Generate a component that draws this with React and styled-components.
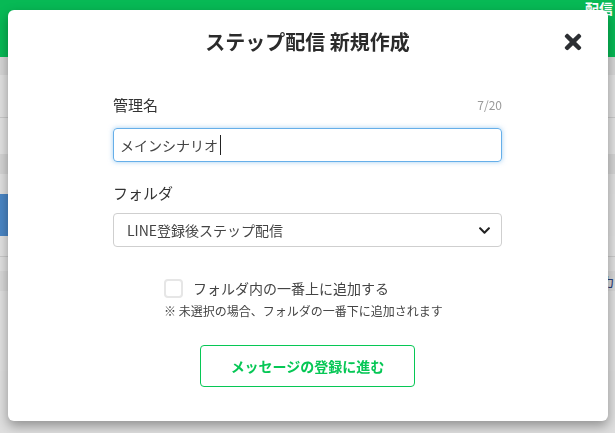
import React from 'react';
import styled, {createGlobalStyle} from 'styled-components';
import {FaTimes, FaChevronDown} from 'react-icons/fa';

const GlobalStyle = createGlobalStyle`
  html, body {
    margin: 0;
    padding: 0;
    width: 100%;
    height: 100%;
    overflow: hidden;
  }
  body {
    font-family: "Noto Sans CJK JP", "Noto Sans", sans-serif;
    background: #dedede;
  }
`;

// page behind the modal
const Page = styled.div`
  width: 100%;
  height: 433px;
  display: flex;
  flex-direction: column;
  background: #dfdfdf;
`;

const Header = styled.header`
  height: 57px;
  flex-shrink: 0;
  background: #07b955;
  display: flex;
  justify-content: flex-end;
  padding-right: 2px;
  color: #fff;
  font-size: 14px;
  font-weight: bold;
`;

const HeaderStat = styled.div`
  display: flex;
  flex-direction: column;
  line-height: 22px;
  margin-top: -3px;
`;

const Row = styled.div`
  height: ${p => p.h}px;
  flex-shrink: 0;
  background: ${p => p.bg || '#e0e0e0'};
  border-bottom: ${p => (p.line ? '1px solid #c9c9c9' : 'none')};
  display: flex;
  align-items: center;
  justify-content: space-between;
`;

const SideBtn = styled.div`
  width: 8px;
  height: 42px;
  background: #4a86c5;
`;

const SideText = styled.span`
  font-size: 14px;
  color: #2b3f7a;
`;

// modal
const Backdrop = styled.div`
  position: fixed;
  inset: 0;
  display: flex;
  justify-content: center;
  align-items: flex-start;
  padding-top: 10px;
`;

const Modal = styled.div`
  width: 600px;
  box-sizing: border-box;
  background: #fff;
  border-radius: 6px;
  box-shadow: 0 5px 12px rgba(0, 0, 0, 0.35);
  padding: 20px 23px 34px;
`;

const ModalHead = styled.div`
  display: grid;
  grid-template-columns: 1fr auto 1fr;
  align-items: center;
`;

const Title = styled.h2`
  grid-column: 2;
  margin: 0;
  font-size: 20px;
  line-height: 24px;
  font-weight: bold;
  color: #2b2b2b;
`;

const CloseButton = styled.button`
  justify-self: end;
  border: 0;
  padding: 0;
  background: none;
  color: #2c2f33;
  display: flex;
  font-size: 24px;
  cursor: pointer;
`;

const Body = styled.div`
  width: 389px;
  margin: 39px auto 0;
  display: flex;
  flex-direction: column;
`;

const LabelRow = styled.div`
  display: flex;
  justify-content: space-between;
  align-items: center;
  height: 22px;
  margin-top: ${p => p.mt || 0}px;
`;

const Label = styled.label`
  font-size: 15px;
  color: #333;
`;

const Counter = styled.span`
  font-size: 12px;
  color: #9a9a9a;
`;

const Field = styled.div`
  height: 34px;
  box-sizing: border-box;
  margin-top: ${p => p.mt}px;
  border: 1px solid ${p => (p.focused ? '#66afe9' : '#cfcfcf')};
  border-radius: 4px;
  box-shadow: ${p => (p.focused ? '0 0 5px rgba(102, 175, 233, 0.6)' : 'none')};
  display: flex;
  align-items: center;
  padding: 0 ${p => (p.focused ? 6 : 13)}px;
  font-size: 14px;
  color: #444;
`;

const Caret = styled.span`
  width: 1px;
  height: 20px;
  background: #222;
  margin-left: 2px;
`;

const Chevron = styled.span`
  margin-left: auto;
  display: flex;
  color: #222;
  font-size: 13px;
  margin-right: -3px;
`;

const Options = styled.div`
  margin: 31px 0 0 51px;
  display: flex;
  flex-direction: column;
  gap: 4px;
`;

const CheckRow = styled.label`
  display: flex;
  align-items: center;
  gap: 10px;
  height: 20px;
  font-size: 14px;
  color: #444;
`;

const Box = styled.span`
  width: 19px;
  height: 19px;
  box-sizing: border-box;
  border: 2px solid #e6e6e6;
  border-radius: 4px;
`;

const Note = styled.p`
  margin: 0;
  font-size: 12px;
  line-height: 18px;
  color: #444;
`;

const Submit = styled.button`
  align-self: center;
  margin-top: 25px;
  width: 215px;
  height: 42px;
  background: #fff;
  border: 1px solid #06c755;
  border-radius: 4px;
  color: #06c755;
  font-family: inherit;
  font-size: 14px;
  font-weight: bold;
  cursor: pointer;
`;

function App() {
    return (
        <>
            <GlobalStyle />
            <Page>
                <Header>
                    <HeaderStat>
                        <span>配信</span>
                        <span>数</span>
                    </HeaderStat>
                </Header>
                <Row h={18} bg="#d6d6d6" />
                <Row h={42} bg="#e1e1e1" line />
                <Row h={36} bg="#e2e2e2" />
                <Row h={20} bg="#d4d4d4" />
                <Row h={20} bg="#e0e0e0" />
                <Row h={42} bg="#e1e1e1"><SideBtn /></Row>
                <Row h={20} bg="#e2e2e2" line />
                <Row h={14} bg="#e0e0e0" />
                <Row h={20} bg="#d8d8d8"><span /><SideText>カ</SideText></Row>
                <Row h={80} bg="#e0e0e0" />
            </Page>
            <Backdrop>
                <Modal>
                    <ModalHead>
                        <Title>ステップ配信 新規作成</Title>
                        <CloseButton aria-label="閉じる"><FaTimes /></CloseButton>
                    </ModalHead>
                    <Body>
                        <LabelRow>
                            <Label>管理名</Label>
                            <Counter>7/20</Counter>
                        </LabelRow>
                        <Field mt={13} focused>
                            メインシナリオ<Caret />
                        </Field>
                        <LabelRow mt={19}>
                            <Label>フォルダ</Label>
                        </LabelRow>
                        <Field mt={10}>
                            LINE登録後ステップ配信
                            <Chevron><FaChevronDown /></Chevron>
                        </Field>
                        <Options>
                            <CheckRow><Box />フォルダ内の一番上に追加する</CheckRow>
                            <Note>※ 未選択の場合、フォルダの一番下に追加されます</Note>
                        </Options>
                        <Submit>メッセージの登録に進む</Submit>
                    </Body>
                </Modal>
            </Backdrop>
        </>
    );
}

export default App;
